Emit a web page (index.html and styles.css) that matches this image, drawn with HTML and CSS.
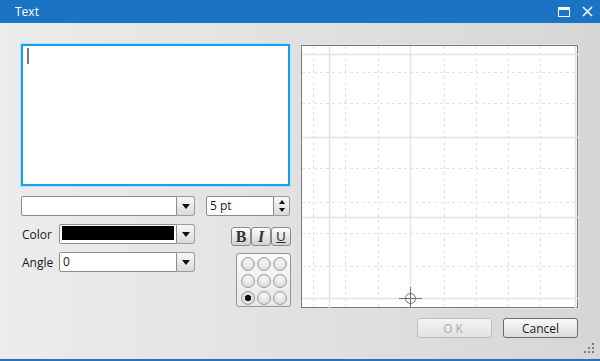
FILE: index.html
```html
<!DOCTYPE html>
<html lang="en">
<head>
  <meta charset="UTF-8" />
  <title>Text</title>
  <link rel="stylesheet" href="styles.css">
</head>
<body>
  <div class="window">
    <div class="titlebar">
      <span class="title">Text</span>
      <div class="win-buttons">
        <svg width="12" height="10" viewBox="0 0 12 10"><rect x="0.5" y="0.5" width="11" height="9" fill="none" stroke="#fff" /><rect x="0" y="0" width="12" height="3" fill="#fff" /></svg>
        <svg width="11" height="11" viewBox="0 0 11 11"><path d="M1 1 L10 10 M10 1 L1 10" stroke="#fff" stroke-width="1.6" /></svg>
      </div>
    </div>

    <div class="content">
      <div class="main">
        <div class="left">
          <div class="textbox"><span class="caret"></span></div>

          <div class="controls">
            <div class="combo wide">
              <div class="field"></div>
              <div class="drop"><span class="arrow"></span></div>
            </div>
            <div class="spinner">
              <div class="field">5 pt</div>
              <div class="spin">
                <span class="up"></span>
                <span class="down"></span>
              </div>
            </div>

            <div class="labeled">
              <label>Color</label>
              <div class="combo">
                <div class="field"><span class="swatch"></span></div>
                <div class="drop"><span class="arrow"></span></div>
              </div>
            </div>
            <div class="styles">
              <button class="style b">B</button>
              <button class="style i">I</button>
              <button class="style u">U</button>
            </div>

            <div class="labeled">
              <label>Angle</label>
              <div class="combo">
                <div class="field">0</div>
                <div class="drop"><span class="arrow"></span></div>
              </div>
            </div>
            <div class="align">
              <span class="dot"></span><span class="dot"></span><span class="dot"></span>
              <span class="dot"></span><span class="dot"></span><span class="dot"></span>
              <span class="dot on"></span><span class="dot"></span><span class="dot"></span>
            </div>
          </div>
        </div>

        <div class="preview">
          <svg width="276" height="262" viewBox="0 0 276 262">
            <g stroke="#e2e2e2" stroke-width="1" stroke-dasharray="3 3">
              <line x1="11.5" y1="0" x2="11.5" y2="262" />
              <line x1="43.5" y1="0" x2="43.5" y2="262" />
              <line x1="76.5" y1="0" x2="76.5" y2="262" />
              <line x1="142.5" y1="0" x2="142.5" y2="262" />
              <line x1="174.5" y1="0" x2="174.5" y2="262" />
              <line x1="206.5" y1="0" x2="206.5" y2="262" />
              <line x1="238.5" y1="0" x2="238.5" y2="262" />
              <line x1="0" y1="26.5" x2="276" y2="26.5" />
              <line x1="0" y1="57.5" x2="276" y2="57.5" />
              <line x1="0" y1="122.5" x2="276" y2="122.5" />
              <line x1="0" y1="156.5" x2="276" y2="156.5" />
              <line x1="0" y1="187.5" x2="276" y2="187.5" />
              <line x1="0" y1="220.5" x2="276" y2="220.5" />
            </g>
            <g stroke="#e4e4e4" stroke-width="1.5">
              <line x1="27.5" y1="0" x2="27.5" y2="262" />
              <line x1="108.5" y1="0" x2="108.5" y2="262" />
              <line x1="273.5" y1="0" x2="273.5" y2="262" />
              <line x1="0" y1="8.5" x2="276" y2="8.5" />
              <line x1="0" y1="91.5" x2="276" y2="91.5" />
              <line x1="0" y1="171.5" x2="276" y2="171.5" />
              <line x1="0" y1="252.5" x2="276" y2="252.5" />
            </g>
            <g stroke="#707070" stroke-width="1" fill="none">
              <circle cx="108.5" cy="252.5" r="5" />
              <line x1="97" y1="252.5" x2="120" y2="252.5" />
              <line x1="108.5" y1="241" x2="108.5" y2="262" />
            </g>
          </svg>
        </div>
      </div>

      <div class="actions">
        <button class="btn" disabled>OK</button>
        <button class="btn">Cancel</button>
      </div>
      <svg class="grip" width="10" height="10" viewBox="0 0 10 10" fill="#7c7c7c">
        <rect x="8" y="0" width="2" height="2" />
        <rect x="4" y="4" width="2" height="2" />
        <rect x="8" y="4" width="2" height="2" />
        <rect x="0" y="8" width="2" height="2" />
        <rect x="4" y="8" width="2" height="2" />
        <rect x="8" y="8" width="2" height="2" />
      </svg>
    </div>
  </div>
</body>
</html>
```

FILE: styles.css
```css
body {
  margin: 0;
  font-family: "Open Sans", "Noto Sans", sans-serif;
  font-size: 12px;
  color: #1a1a1a;
}
.window {
  width: 600px;
  height: 361px;
  display: flex;
  flex-direction: column;
  box-sizing: border-box;
  border-bottom: 2px solid #1e74c2;
  background: linear-gradient(to right, #ececec, #d6d6d6);
}
.titlebar {
  height: 23px;
  background: #1b73c3;
  display: flex;
  align-items: center;
  justify-content: space-between;
  padding: 0 7px 0 15px;
}
.title {
  color: #fff;
  font-size: 12px;
}
.win-buttons {
  display: flex;
  align-items: center;
  gap: 12px;
}
.content {
  position: relative;
  flex: 1;
  padding: 21px 22px 0 21px;
}
.main {
  display: flex;
  gap: 10px;
}
.left {
  width: 270px;
}
.textbox {
  width: 269px;
  height: 142px;
  box-sizing: border-box;
  background: #fff;
  border: 2px solid #12a3ea;
  box-shadow: 0 0 0 1px #b6e1f6;
  padding: 2px 4px;
}
.caret {
  display: block;
  width: 2px;
  height: 16px;
  background: #7a7a7a;
}
.controls {
  margin-top: 10px;
  display: grid;
  grid-template-columns: 174px 86px;
  grid-template-rows: 20px 20px 20px;
  column-gap: 10px;
  row-gap: 8px;
}
.combo {
  display: flex;
  height: 20px;
  flex: 1;
}
.field {
  flex: 1;
  box-sizing: border-box;
  background: #fff;
  border: 1px solid #8c8c8c;
  border-radius: 2px 0 0 2px;
  padding: 0 3px;
  line-height: 18px;
}
.drop {
  width: 18px;
  box-sizing: border-box;
  border: 1px solid #9c9c9c;
  border-left: none;
  border-radius: 0 3px 3px 0;
  background: linear-gradient(#f7f7f7, #dadada);
  display: flex;
  align-items: center;
  justify-content: center;
}
.arrow {
  width: 0;
  height: 0;
  border-left: 4px solid transparent;
  border-right: 4px solid transparent;
  border-top: 5px solid #111;
}
.labeled {
  display: flex;
  align-items: center;
}
.labeled label {
  width: 37px;
  padding-left: 1px;
}
.swatch {
  display: block;
  height: 14px;
  margin: 1px -1px;
  background: #000;
}
.spinner {
  display: flex;
  width: 84px;
  height: 20px;
  margin-left: 1px;
}
.spinner .field {
  border-radius: 2px 0 0 2px;
}
.spin {
  width: 16px;
  display: flex;
  flex-direction: column;
  box-sizing: border-box;
  border: 1px solid #9c9c9c;
  border-left: none;
  border-radius: 0 3px 3px 0;
  background: linear-gradient(#f7f7f7, #dadada);
  align-items: center;
  justify-content: space-evenly;
}
.up {
  border-left: 3px solid transparent;
  border-right: 3px solid transparent;
  border-bottom: 4px solid #111;
}
.down {
  border-left: 3px solid transparent;
  border-right: 3px solid transparent;
  border-top: 4px solid #111;
}
.styles {
  justify-self: end;
  margin-top: 3px;
  display: flex;
  height: 19px;
}
.style {
  width: 20px;
  height: 19px;
  padding: 0;
  margin: 0;
  border: 1px solid #8a8a8a;
  border-radius: 3px;
  background: linear-gradient(#fdfdfd, #d2d2d2);
  font-family: "Liberation Serif", serif;
  font-size: 16px;
  font-weight: bold;
  color: #333;
  line-height: 16px;
}
.style.i {
  font-style: italic;
}
.style.u {
  text-decoration: underline;
  font-weight: normal;
  font-family: "Liberation Sans", sans-serif;
  font-size: 13px;
}
.align {
  justify-self: end;
  align-self: start;
  margin-top: 1px;
  width: 55px;
  height: 54px;
  box-sizing: border-box;
  border: 1px solid #949494;
  border-radius: 3px;
  background: linear-gradient(#fbfbfb, #e6e6e6);
  display: grid;
  grid-template-columns: repeat(3, 14px);
  grid-template-rows: repeat(3, 14px);
  gap: 3px 2px;
  padding: 3px 0 0 4px;
}
.dot {
  box-sizing: border-box;
  border: 1px solid #9a9a9a;
  border-radius: 50%;
  background: radial-gradient(circle at 50% 35%, #fafafa, #cfcfcf);
}
.dot.on {
  background: radial-gradient(circle, #111 0 3px, #e8e8e8 3.5px, #cfcfcf);
}
.preview {
  margin-top: 1px;
  width: 277px;
  height: 263px;
  box-sizing: border-box;
  background: #fff;
  border: 1px solid #7a7a7a;
  box-shadow: 0 0 0 1px #e2e2e2;
}
.preview svg {
  display: block;
}
.actions {
  margin-top: 10px;
  display: flex;
  justify-content: flex-end;
  gap: 11px;
}
.btn {
  width: 75px;
  height: 20px;
  padding: 0;
  border: 1px solid #6a6a6a;
  border-radius: 3px;
  background: linear-gradient(#fafafa, #dcdcdc);
  font-family: "Open Sans", "Noto Sans", sans-serif;
  font-size: 12px;
  color: #1a1a1a;
}
.btn:disabled {
  border-color: #bdbdbd;
  color: #a8a8a8;
  letter-spacing: 3px;
  background: linear-gradient(#f4f4f4, #e2e2e2);
}
.grip {
  position: absolute;
  right: 6px;
  bottom: 6px;
}
```
